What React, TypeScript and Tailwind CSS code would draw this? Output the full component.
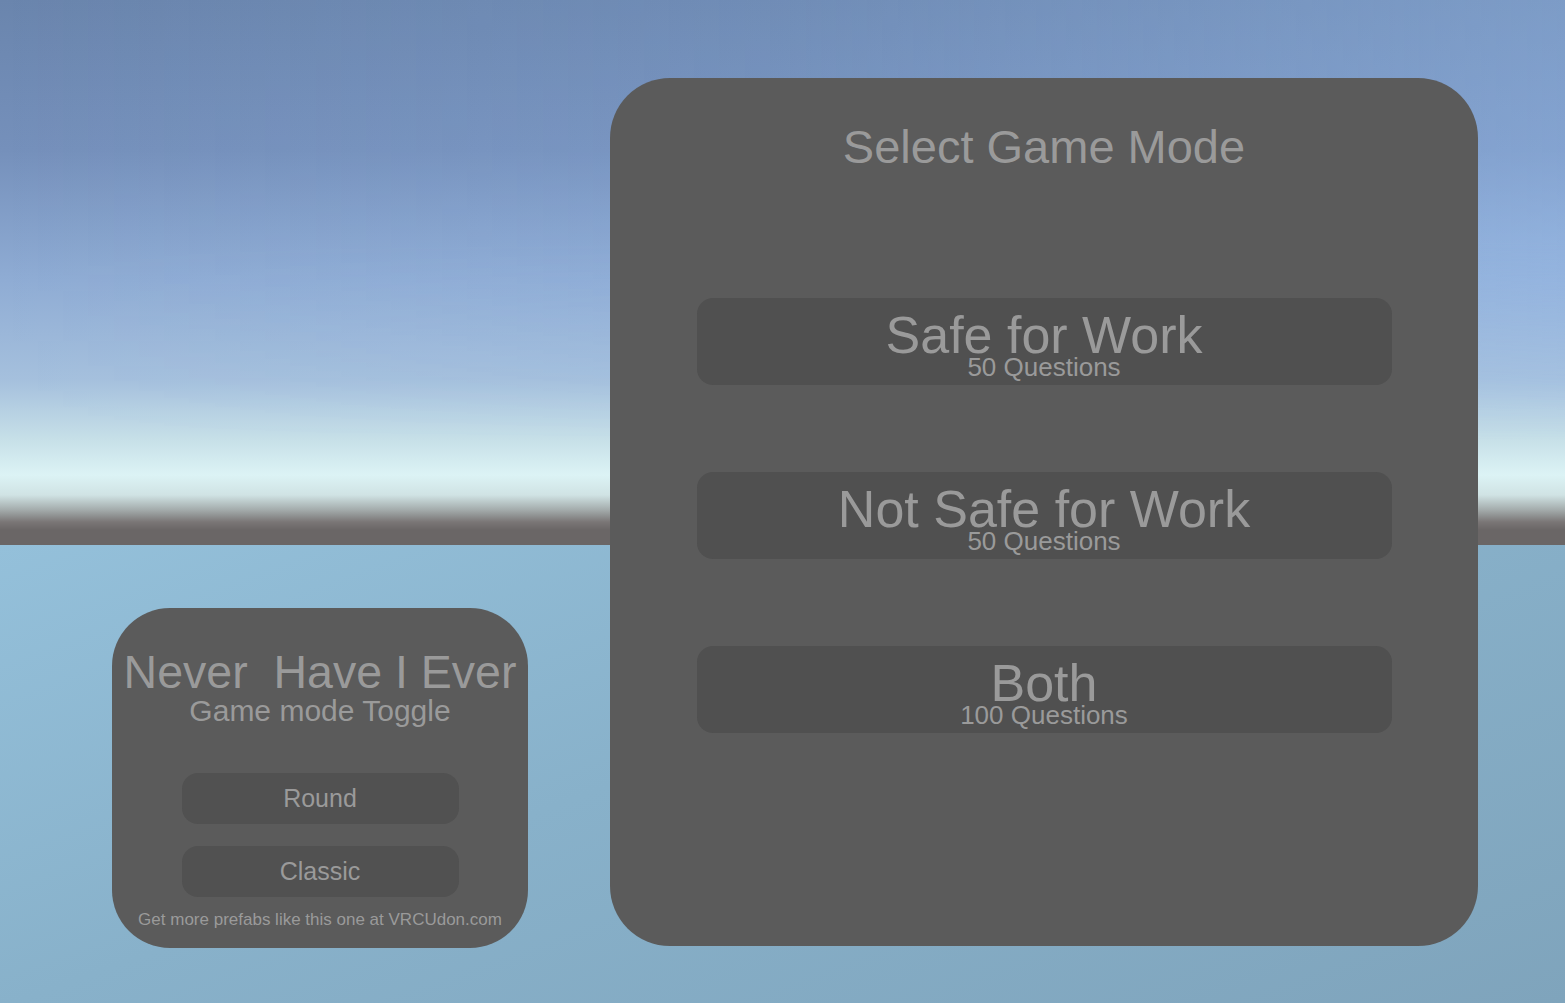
import React from 'react';

const modes = [
  { title: 'Safe for Work', count: '50 Questions' },
  { title: 'Not Safe for Work', count: '50 Questions' },
  { title: 'Both', count: '100 Questions' },
];

const Backdrop: React.FC = () => (
  <div className="col-start-1 row-start-1 isolate flex flex-col">
    {/* upper sky */}
    <div className="h-[440px] bg-[linear-gradient(to_bottom,#6a85ad_0px,#7590bb_150px,#8facd4_280px,#a5c0dd_380px,#c7e0e8_440px)]">
      <div className="h-full bg-[linear-gradient(to_right,rgba(160,200,255,0)_0%,rgba(160,200,255,0.12)_50%,rgba(165,205,255,0.32)_100%)] [mask-image:linear-gradient(to_bottom,black_0%,black_55%,transparent_100%)]" />
    </div>
    {/* horizon */}
    <div className="h-[105px] bg-[linear-gradient(to_bottom,#c7e0e8_0px,#dcf3f5_35px,#d0e3e4_55px,#a3abab_70px,#7a7676_82px,#6a6666_90px,#6a6666_105px)]" />
    {/* ground */}
    <div className="flex-1 bg-[linear-gradient(160deg,#94c0da_0%,#88b1ca_45%,#7fa4bc_100%)]" />
  </div>
);

const ToggleCard: React.FC = () => (
  <div className="mt-[608px] flex h-[340px] w-[416px] flex-col items-center rounded-[58px] bg-[#5b5b5b] pt-[41px] text-[#9a9a9a]">
    <h2 className="whitespace-pre text-[46.5px] leading-none">Never  Have I Ever</h2>
    <p className="text-[30px] leading-none">Game mode Toggle</p>
    <div className="mt-[47px] flex flex-col gap-[22px]">
      <button className="h-[51px] w-[277px] rounded-[16px] bg-[#515151] text-[25px] leading-none text-[#9a9a9a]">
        Round
      </button>
      <button className="h-[51px] w-[277px] rounded-[16px] bg-[#515151] text-[25px] leading-none text-[#9a9a9a]">
        Classic
      </button>
    </div>
    <p className="mt-[14px] text-[17px] leading-none">Get more prefabs like this one at VRCUdon.com</p>
  </div>
);

const ModeCard: React.FC = () => (
  <div className="mt-[78px] flex h-[868px] w-[868px] flex-col items-center rounded-[60px] bg-[#5b5b5b] pt-[45px] text-[#9a9a9a]">
    <h1 className="text-[47px] leading-none">Select Game Mode</h1>
    <div className="mt-[128px] flex w-[695px] flex-col gap-[87px]">
      {modes.map((mode) => (
        <button
          key={mode.title}
          className="flex h-[87px] flex-col items-center rounded-[16px] bg-[#505050] pt-[15px] text-[#9a9a9a]"
        >
          <span className="text-[52px] leading-[44px]">{mode.title}</span>
          <span className="text-[26px] leading-[20px]">{mode.count}</span>
        </button>
      ))}
    </div>
  </div>
);

export default function App() {
  return (
    <div className="grid h-[1003px] w-full overflow-hidden font-['Liberation_Sans',Arial,sans-serif]">
      <Backdrop />
      <div className="relative col-start-1 row-start-1 flex items-start gap-[82px] pl-[112px]">
        <ToggleCard />
        <ModeCard />
      </div>
    </div>
  );
}
